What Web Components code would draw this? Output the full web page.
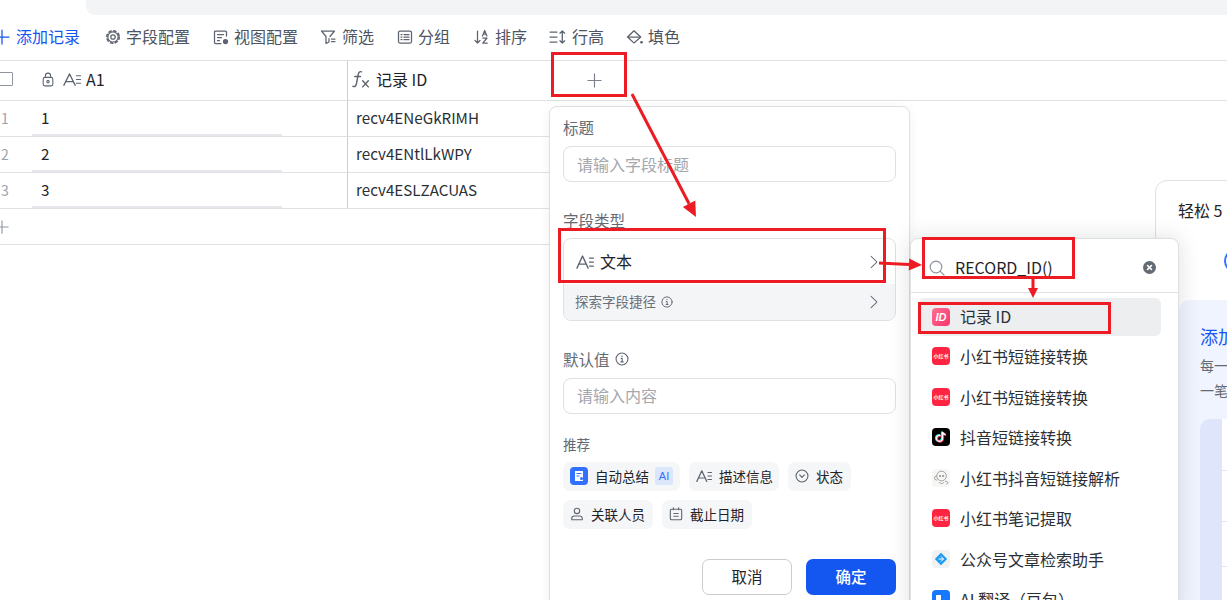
<!DOCTYPE html>
<html lang="zh">
<head>
<meta charset="utf-8">
<title>添加字段</title>
<style>
    html, body { margin: 0; height: 600px; overflow: hidden; background: #fff; }
    body {
        position: relative;
        font-family: "Noto Sans CJK SC", "Noto Sans", sans-serif;
        font-size: 16px;
        color: #1f2329;
    }
</style>
</head>
<body>
<top-strip></top-strip>
<app-toolbar>
    <tool-item icon="plus" tone="blue" gap="6" after="25">添加记录</tool-item>
    <tool-item icon="gear" after="23">字段配置</tool-item>
    <tool-item icon="view" after="22">视图配置</tool-item>
    <tool-item icon="filter" gap="6" after="23">筛选</tool-item>
    <tool-item icon="group" after="24">分组</tool-item>
    <tool-item icon="sort" after="22">排序</tool-item>
    <tool-item icon="height" gap="6" after="22" wide>行高</tool-item>
    <tool-item icon="fill" gap="5" wide>填色</tool-item>
</app-toolbar>
<data-table></data-table>
<hint-card></hint-card>
<field-popup></field-popup>
<func-menu>
    <menu-item tile="id" selected>记录 ID</menu-item>
    <menu-item tile="xhs" tile-text="小红书">小红书短链接转换</menu-item>
    <menu-item tile="xhs" tile-text="小红书">小红书短链接转换</menu-item>
    <menu-item tile="tiktok">抖音短链接转换</menu-item>
    <menu-item tile="bot">小红书抖音短链接解析</menu-item>
    <menu-item tile="xhs" tile-text="小红书">小红书笔记提取</menu-item>
    <menu-item tile="wx">公众号文章检索助手</menu-item>
    <menu-item tile="trans">AI 翻译（豆包）</menu-item>
</func-menu>
<annot-layer></annot-layer>

<script>
const ICONS = {
    plus: '<path d="M8 1v14M1 8h14"/>',
    gear: '<circle cx="8" cy="8" r="5.200"/><circle cx="8" cy="8" r="6.200" stroke-width="1.600" stroke-dasharray="2.200 2.670"/><circle cx="8" cy="8" r="2.200"/>',
    view: '<path d="M13.500 7V3a1 1 0 0 0-1-1h-10a1 1 0 0 0-1 1v10.500a1 1 0 0 0 1 1H8"/><path d="M4.500 5.500h6M4.500 8.500h4M4.500 11.500h2"/><circle cx="12.500" cy="12.500" r="2" fill="currentColor"/>',
    filter: '<path d="M1.500 2h13L10 7.500M9 9.500v3.500l-3 1.500V7.500L1.500 2"/><path d="M11.500 10h3.500M11.500 12.500h3.500"/>',
    group: '<rect x="1.500" y="2" width="13" height="12" rx="1.500"/><path d="M4 5.500h1M4 8h1M4 10.500h1M7 5.500h5M7 8h5M7 10.500h5"/>',
    sort: '<path d="M3.500 2v12M1 11.500 3.500 14 6 11.500"/><path d="M8.500 7 10.700 1.500 12.900 7M9.300 5.200h2.800"/><path d="M8.800 9h4.200l-4.200 5.200h4.400"/>',
    height: '<path d="M1 3h6.500M1 8h6.500M1 13h6.500"/><path d="M12.500 2v12M10.300 4.200l2.200-2.200 2.200 2.200M10.300 11.800l2.200 2.200 2.200-2.200"/>',
    fill: '<path d="M7.500 1.800 13.800 8 8.300 13.400a1 1 0 0 1-1.400 0L1.500 8z"/><path d="M2 8h11.500"/><circle cx="14.600" cy="13.300" r="1.300" fill="currentColor" stroke="none"/>',
    lock: '<rect x="2.500" y="5.800" width="11" height="9" rx="2"/><path d="M5 5.800V4.200a3 3 0 0 1 6 0v1.600"/><circle cx="8" cy="10.300" r="1.300"/>',
    text: '<path d="M.8 14.200 5.800 2l5 12.200M2.500 10.200h6.600"/><path d="M12 4h3.500M12 8h3.500M12 12h3.500"/>',
    fx: '<path d="M8.500 1.600C6.600.9 5.800 2.200 5.400 4.500L4 12c-.4 2.200-1.500 3.200-3.200 2.500M2.500 5.800h5"/><path d="M9.500 9.500l5 5.500M14.500 9.500l-5 5.500"/>',
    chevron: '<path d="M2 1.500 14 8 2 14.500"/>',
    info: '<circle cx="8" cy="8" r="6.800"/><path d="M7 7.300h1.200v4M6.800 11.300h2.600" /><circle cx="8" cy="4.800" r=".8" fill="currentColor" stroke="none"/>',
    search: '<circle cx="7" cy="7" r="5.800"/><path d="m11.300 11.300 3.700 3.700"/>',
    status: '<circle cx="8" cy="8" r="6.800"/><path d="M5.300 6.800 8 9.500l2.700-2.700"/>',
    person: '<circle cx="8" cy="4.500" r="3.100"/><path d="M2 14.500v-1.300a3 3 0 0 1 3-3h6a3 3 0 0 1 3 3v1.300z"/>',
    date: '<rect x="1.500" y="2.500" width="13" height="12" rx="1.500"/><path d="M5 1v2M11 1v2M5.500 7.500h1M9.500 7.500h1M5.500 10.500h1M9.500 10.500h1M7.500 10.500h1M7.500 7.500h1"/>'
};

class UiIcon extends HTMLElement {
    connectedCallback() {
        const w = this.getAttribute('w') || 16;
        const h = this.getAttribute('h') || w;
        const sw = this.getAttribute('sw') || 1.250;
        this.attachShadow({ mode: 'open' }).innerHTML = `
        <style>
            :host { display: inline-flex; flex: none; width: ${w}px; height: ${h}px; }
            svg { display: block; width: 100%; height: 100%; overflow: visible; }
        </style>
        <svg viewBox="0 0 16 16" preserveAspectRatio="none" fill="none" stroke="currentColor" stroke-width="${sw}" stroke-linecap="round" stroke-linejoin="round">${ICONS[this.getAttribute('name')] || ''}</svg>`;
    }
}

class TopStrip extends HTMLElement {
    constructor() {
        super();
        this.attachShadow({ mode: 'open' }).innerHTML = `
        <style>
            :host { display: block; height: 15px; margin-left: 86px; background: #f3f4f6; border-bottom-left-radius: 9px; }
        </style>`;
    }
}

class AppToolbar extends HTMLElement {
    constructor() {
        super();
        this.attachShadow({ mode: 'open' }).innerHTML = `
        <style>
            :host {
                display: flex;
                align-items: center;
                height: 45px;
                margin-left: -6px;
                border-bottom: 1px solid #dee0e3;
                box-sizing: content-box;
            }
        </style>
        <slot></slot>`;
    }
}

class ToolItem extends HTMLElement {
    connectedCallback() {
        const blue = this.getAttribute('tone') === 'blue';
        const wide = this.hasAttribute('wide');
        this.attachShadow({ mode: 'open' }).innerHTML = `
        <style>
            :host {
                display: inline-flex;
                align-items: center;
                gap: ${this.getAttribute('gap') || 5}px;
                margin-right: ${this.getAttribute('after') || 0}px;
                margin-bottom: 2px;
                font-size: 16px;
                line-height: 22px;
                color: ${blue ? '#1456f0' : '#4e5461'};
            }
            ui-icon { color: ${blue ? '#1456f0' : '#5d6470'}; }
            span { position: relative; top: -1px; }
        </style>
        <ui-icon name="${this.getAttribute('icon')}" w="${wide ? 17 : 16}" h="16"></ui-icon><span><slot></slot></span>`;
    }
}

class DataTable extends HTMLElement {
    constructor() {
        super();
        const rows = [['1', 'recv4ENeGkRIMH'], ['2', 'recv4ENtlLkWPY'], ['3', 'recv4ESLZACUAS']];
        this.attachShadow({ mode: 'open' }).innerHTML = `
        <style>
            :host { display: block; font-size: 15.200px; }
            .head, .row, .add {
                display: grid;
                box-sizing: border-box;
                border-bottom: 1px solid #dee0e3;
            }
            .head { height: 40px; grid-template-columns: 32px 316px 201px 1fr; font-size: 16px; }
            .row, .add { width: 549px; height: 36px; grid-template-columns: 32px 316px 201px; }
            .add { display: flex; align-items: center; color: #8f959e; }
            .add ui-icon { margin-left: -5px; }
            .cell { display: flex; align-items: center; min-width: 0; padding-bottom: 3px; box-sizing: border-box; }
            .num { color: #9ea3ab; font-size: 14px; padding-left: 1px; padding-bottom: 2px; }
            .check { width: 14px; height: 14px; box-sizing: border-box; border: 1.500px solid #8f959e; margin-left: -1px; border-radius: 1px; }
            .title { padding-left: 9px; gap: 5px; color: #1f2329; }
            .first { border-right: 1px solid #c9ccd1; }
            .head .rec { padding-left: 4px; gap: 6px; }
            .icon { color: #5d6470; }
            .row .first {
                padding-left: 9px;
                background: linear-gradient(#e6e7ea, #e6e7ea) 0 100% / 250px 2px no-repeat;
            }
            .row .rec { padding-left: 8px; color: #2b2f36; }
            .more { justify-content: flex-start; padding-left: 38px; padding-bottom: 0; color: #7d828c; }
        </style>
        <div class="head">
            <div class="cell"><span class="check"></span></div>
            <div class="cell title first">
                <ui-icon class="icon" name="lock" w="14" h="15"></ui-icon>
                <ui-icon class="icon" name="text" w="18" h="15" style="margin-left:3px"></ui-icon>
                <span class="label">A1</span>
            </div>
            <div class="cell rec"><ui-icon class="icon" name="fx" w="18" h="18"></ui-icon><span>记录 ID</span></div>
            <div class="cell more"><ui-icon name="plus" w="15" h="15"></ui-icon></div>
        </div>
        ${rows.map(r => `
        <div class="row">
            <div class="cell num">${r[0]}</div>
            <div class="cell first">${r[0]}</div>
            <div class="cell rec">${r[1]}</div>
        </div>`).join('')}
        <div class="add"><ui-icon name="plus" w="14" h="14"></ui-icon></div>`;
    }
}

class FieldChip extends HTMLElement {
    connectedCallback() {
        this.attachShadow({ mode: 'open' }).innerHTML = `
        <style>
            :host {
                display: inline-flex;
                align-items: center;
                gap: 7px;
                height: 29px;
                padding: 0 7px 1px;
                box-sizing: border-box;
                border-radius: 7px;
                background: #f5f6f7;
                font-size: 13.500px;
                white-space: nowrap;
                color: #1f2329;
            }
        </style>
        <slot name="icon"></slot><slot></slot>`;
    }
}

class FieldPopup extends HTMLElement {
    constructor() {
        super();
        this.attachShadow({ mode: 'open' }).innerHTML = `
        <style>
            :host {
                position: absolute;
                left: 549px;
                top: 106px;
                width: 361px;
                height: 510px;
                box-sizing: border-box;
                padding: 9px 13px 0;
                background: #fff;
                border: 1px solid #dee0e3;
                border-radius: 8px;
                box-shadow: 0 2px 12px rgba(31,35,41,.06);
                display: flex;
                flex-direction: column;
            }
            label { display: flex; align-items: center; gap: 5px; font-size: 15.500px; line-height: 22px; color: #646a73; }
            .input {
                display: flex;
                align-items: center;
                height: 36px;
                margin-top: 8px;
                padding: 0 13px;
                box-sizing: border-box;
                border: 1px solid #dee0e3;
                border-radius: 8px;
                color: #a3a7ae;
                font-size: 16px;
            }
            .sec { margin-top: 27px; }
            .sec.low { margin-top: 27px; margin-bottom: 1px; }
            .sec + .input { margin-top: 7px; padding-bottom: 2px; }
            .select {
                margin-top: 7px;
                height: 83px;
                box-sizing: border-box;
                border: 1px solid #dee0e3;
                border-radius: 8px;
                overflow: hidden;
                display: flex;
                flex-direction: column;
            }
            .sel-top { height: 45px; box-sizing: border-box; display: flex; align-items: center; padding: 0 17px 0 12px; gap: 6px; font-size: 16px; color: #1f2329; }
            .sel-top span { position: relative; top: -1px; }
            .sel-bottom { flex: 1; display: flex; align-items: center; padding: 0 17px 0 11px; gap: 5px; background: #f4f5f7; font-size: 13.500px; color: #6b7078; }
            .sel-bottom span { position: relative; top: -1px; }
            .grow { flex: 1; }
            .gray { color: #5d6470; }
            .rec { margin-top: 20px; font-size: 13.500px; line-height: 20px; color: #646a73; }
            .chips { display: flex; flex-wrap: wrap; gap: 9px; margin-top: 8px; }
            .tile { width: 18px; height: 18px; border-radius: 4px; background: #3370ff; display: flex; align-items: center; justify-content: center; }
            .ai { margin-left: -1px; width: 18px; height: 18px; border-radius: 3px; background: #dbe6fc; color: #3370ff; font-size: 11px; line-height: 18px; text-align: center; font-family: "Liberation Sans", sans-serif; }
            .actions { display: flex; justify-content: flex-end; gap: 14px; margin-top: 30px; }
            .btn { width: 90px; height: 36px; box-sizing: border-box; border-radius: 7px; display: flex; align-items: center; justify-content: center; padding-bottom: 3px; font-size: 15.500px; }
            .cancel { border: 1px solid #c9ccd1; color: #1f2329; background: #fff; }
            .ok { background: #1456f0; color: #fff; font-weight: 500; }
        </style>
        <label>标题</label>
        <div class="input">请输入字段标题</div>
        <label class="sec">字段类型</label>
        <div class="select">
            <div class="sel-top">
                <ui-icon class="gray" name="text" w="18" h="16"></ui-icon>
                <span>文本</span><span class="grow"></span>
                <ui-icon class="gray" name="chevron" w="8" h="14" sw="1.300"></ui-icon>
            </div>
            <div class="sel-bottom">
                <span>探索字段捷径</span>
                <ui-icon class="gray" name="info" w="12" h="12"></ui-icon>
                <span class="grow"></span>
                <ui-icon class="gray" name="chevron" w="8" h="14" sw="1.300"></ui-icon>
            </div>
        </div>
        <label class="sec low">默认值 <ui-icon class="gray" name="info" w="14" h="14"></ui-icon></label>
        <div class="input" style="margin-top:7px">请输入内容</div>
        <div class="rec">推荐</div>
        <div class="chips">
            <field-chip style="width:117px">
                <span class="tile" slot="icon">
                    <svg width="12" height="12" viewBox="0 0 12 12"><path d="M2 1h8v10H2z" fill="#fff"/><path d="M3.500 3.500h5M3.500 6h3" stroke="#3370ff"/><circle cx="8.500" cy="8.500" r="1.500" fill="#3370ff"/></svg>
                </span>
                自动总结<span class="ai">AI</span>
            </field-chip>
            <field-chip style="width:90px"><ui-icon class="gray" slot="icon" name="text" w="16" h="14"></ui-icon>描述信息</field-chip>
            <field-chip style="width:63px"><ui-icon class="gray" slot="icon" name="status" w="14" h="14"></ui-icon>状态</field-chip>
            <field-chip style="width:90px"><ui-icon class="gray" slot="icon" name="person" w="14" h="14"></ui-icon>关联人员</field-chip>
            <field-chip style="width:90px"><ui-icon class="gray" slot="icon" name="date" w="14" h="14"></ui-icon>截止日期</field-chip>
        </div>
        <div class="actions">
            <div class="btn cancel">取消</div>
            <div class="btn ok">确定</div>
        </div>`;
    }
}

class MenuItem extends HTMLElement {
    tile() {
        const t = this.getAttribute('tile');
        if (t === 'id') return '<div class="t id">ID</div>';
        if (t === 'xhs') return `<div class="t xhs">${this.getAttribute('tile-text')}</div>`;
        if (t === 'tiktok') return `<div class="t tk"><svg width="14" height="14" viewBox="0 0 14 14" fill="none" stroke-width="2"><path d="M6.500 5.500a3 3 0 1 0 2 3V2c.3 1.500 1.500 2.500 3 2.500" stroke="#25f4ee" transform="translate(-.6 -.4)"/><path d="M6.500 5.500a3 3 0 1 0 2 3V2c.3 1.500 1.500 2.500 3 2.500" stroke="#fe2c55" transform="translate(.6 .4)"/><path d="M6.500 5.500a3 3 0 1 0 2 3V2c.3 1.500 1.500 2.500 3 2.500" stroke="#fff" stroke-width="1.300"/></svg></div>`;
        if (t === 'bot') return `<div class="t bot"><svg width="18" height="18" viewBox="0 0 18 18" fill="none" stroke="#9a9a9a" stroke-width=".9"><circle cx="9.500" cy="7" r="4.800"/><path d="M4.500 7a2 2 0 0 0 0 4h1M7 13c1 2 4 2 5 0M13 12l3 1.500-1.500 2"/><circle cx="8" cy="7" r=".7" fill="#777"/><circle cx="11" cy="7" r=".7" fill="#777"/></svg></div>`;
        if (t === 'wx') return `<div class="t wx"><svg width="14" height="14" viewBox="0 0 14 14"><path d="M7 .8 13.200 7 7 13.200.8 7z" fill="#1d9bf0"/><path d="M4.500 7h5M7 4.500 9.500 7 7 9.500" stroke="#fff" fill="none"/></svg></div>`;
        if (t === 'trans') return `<div class="t trans"><svg width="14" height="14" viewBox="0 0 14 14"><path d="M2 3h5v5H2z" fill="#fff"/><path d="M9 8h4v2H9z" fill="#0b2f7a"/></svg></div>`;
        return '';
    }

    connectedCallback() {
        const sel = this.hasAttribute('selected');
        this.attachShadow({ mode: 'open' }).innerHTML = `
        <style>
            :host {
                display: flex;
                align-items: center;
                gap: 10px;
                height: ${sel ? 38 : 40.500}px;
                padding-left: 14px;
                box-sizing: border-box;
                border-radius: 6px;
                background: ${sel ? '#eceef0' : 'transparent'};
                font-size: 16px;
                color: #2b2f36;
                flex: none;
            }
            span { position: relative; top: ${sel ? -1 : 0}px; }
            .t { width: 18px; height: 18px; border-radius: 4px; display: flex; align-items: center; justify-content: center; flex: none; overflow: hidden; }
            .id { background: linear-gradient(135deg, #ff6f91, #f7366f); color: #fff; font: italic 700 11px "Liberation Sans", sans-serif; }
            .xhs { background: #fe2442; color: #fff; font-size: 5px; font-weight: 700; line-height: 18px; white-space: nowrap; }
            .tk { background: #000; }
            .bot { background: #f6f6f4; }
            .wx { background: #f0f1f2; }
            .trans { background: #1677ff; }
        </style>
        ${this.tile()}<span><slot></slot></span>`;
    }
}

class FuncMenu extends HTMLElement {
    constructor() {
        super();
        this.attachShadow({ mode: 'open' }).innerHTML = `
        <style>
            :host {
                position: absolute;
                left: 910px;
                top: 238px;
                width: 269px;
                height: 380px;
                box-sizing: border-box;
                background: #fff;
                border: 1px solid #dee0e3;
                border-radius: 8px;
                box-shadow: 0 0 22px rgba(31,35,41,.14);
                display: flex;
                flex-direction: column;
            }
            .search {
                height: 54px;
                flex: none;
                display: flex;
                align-items: flex-end;
                padding: 0 22px 13px 18px;
                gap: 10px;
                box-sizing: border-box;
                border-bottom: 1px solid #dee0e3;
                font-size: 16px;
                color: #1f2329;
                line-height: 22px;
            }
            .search ui-icon:first-child { color: #8f959e; margin-bottom: 3px; }
            .q { flex: 1; position: relative; top: -1px; }
            .clear { width: 13px; height: 13px; margin-bottom: 5px; flex: none; }
            .list { display: flex; flex-direction: column; padding: 5px 17px 0 7px; }
        </style>
        <div class="search">
            <ui-icon name="search" w="16" h="16" sw="1.200"></ui-icon>
            <span class="q">RECORD_ID()</span>
            <svg class="clear" viewBox="0 0 12 12"><circle cx="6" cy="6" r="6" fill="#646a73"/><path d="M3.800 3.800l4.400 4.400M8.200 3.800 3.800 8.200" stroke="#fff" stroke-width="1.400"/></svg>
        </div>
        <div class="list"><slot></slot></div>`;
    }
}

class HintCard extends HTMLElement {
    constructor() {
        super();
        this.attachShadow({ mode: 'open' }).innerHTML = `
        <style>
            :host {
                position: absolute;
                left: 1155px;
                top: 180px;
                width: 300px;
                height: 440px;
                box-sizing: border-box;
                background: #fff;
                border: 1px solid #dee0e3;
                border-radius: 12px;
                padding: 18px 0 0 22px;
                overflow: hidden;
            }
            .head { font-size: 16px; line-height: 22px; color: #1f2329; }
            .dot { width: 24px; height: 24px; box-sizing: border-box; border: 2px solid #3370ff; border-radius: 50%; margin: 28px 0 0 46px; }
            .panel { margin: 27px 0 0 1px; height: 320px; padding: 23px 0 0 21px; background: #f0f4fe; border-radius: 10px; }
            .title { font-size: 18px; line-height: 26px; margin-bottom: 4px; color: #1456f0; }
            .desc { font-size: 14px; line-height: 25px; color: #646a73; }
            .inner { margin-top: 16px; height: 190px; padding-left: 22px; background: #dfe6fb; border-radius: 10px; }
            .sheet { height: 100%; background: #fff; display: flex; flex-direction: column; }
            .sheet div { border-bottom: 1px solid #e4e6ea; flex: none; box-sizing: border-box; }
        </style>
        <div class="head">轻松 5</div>
        <div class="dot"></div>
        <div class="panel">
            <div class="title">添加</div>
            <div class="desc">每一</div>
            <div class="desc">一笔</div>
            <div class="inner">
                <div class="sheet">
                    <div style="height:52px"></div>
                    <div style="height:51px"></div>
                    <div style="height:45px"></div>
                </div>
            </div>
        </div>`;
    }
}

class AnnotLayer extends HTMLElement {
    constructor() {
        super();
        const RED = '#ed1c24';
        const rect = (x1, y1, x2, y2) => `<rect x="${x1 + 1.500}" y="${y1 + 1.500}" width="${x2 - x1 - 3}" height="${y2 - y1 - 3}" fill="none" stroke="${RED}" stroke-width="3"/>`;
        const arrow = (x1, y1, x2, y2, head = 15, half = 7) => {
            const a = Math.atan2(y2 - y1, x2 - x1);
            const bx = x2 - head * Math.cos(a), by = y2 - head * Math.sin(a);
            const nx = -Math.sin(a) * half, ny = Math.cos(a) * half;
            return `<line x1="${x1}" y1="${y1}" x2="${bx}" y2="${by}" stroke="${RED}" stroke-width="3"/>
                <polygon points="${x2},${y2} ${bx + nx},${by + ny} ${bx - nx},${by - ny}" fill="${RED}"/>`;
        };
        this.attachShadow({ mode: 'open' }).innerHTML = `
        <style>
            :host { position: absolute; inset: 0; pointer-events: none; }
            svg { display: block; }
        </style>
        <svg width="1227" height="600">
            ${rect(551, 52, 627, 97)}
            ${rect(558, 228, 886, 283)}
            ${rect(922, 237, 1075, 279)}
            ${rect(918, 302, 1111, 334)}
            ${arrow(632, 94, 696, 217)}
            ${arrow(879, 263, 922, 265, 13, 6)}
            ${arrow(1033, 279, 1033, 298, 10, 5)}
        </svg>`;
    }
}

customElements.define('ui-icon', UiIcon);
customElements.define('top-strip', TopStrip);
customElements.define('app-toolbar', AppToolbar);
customElements.define('tool-item', ToolItem);
customElements.define('data-table', DataTable);
customElements.define('field-chip', FieldChip);
customElements.define('field-popup', FieldPopup);
customElements.define('menu-item', MenuItem);
customElements.define('func-menu', FuncMenu);
customElements.define('hint-card', HintCard);
customElements.define('annot-layer', AnnotLayer);
</script>
</body>
</html>
